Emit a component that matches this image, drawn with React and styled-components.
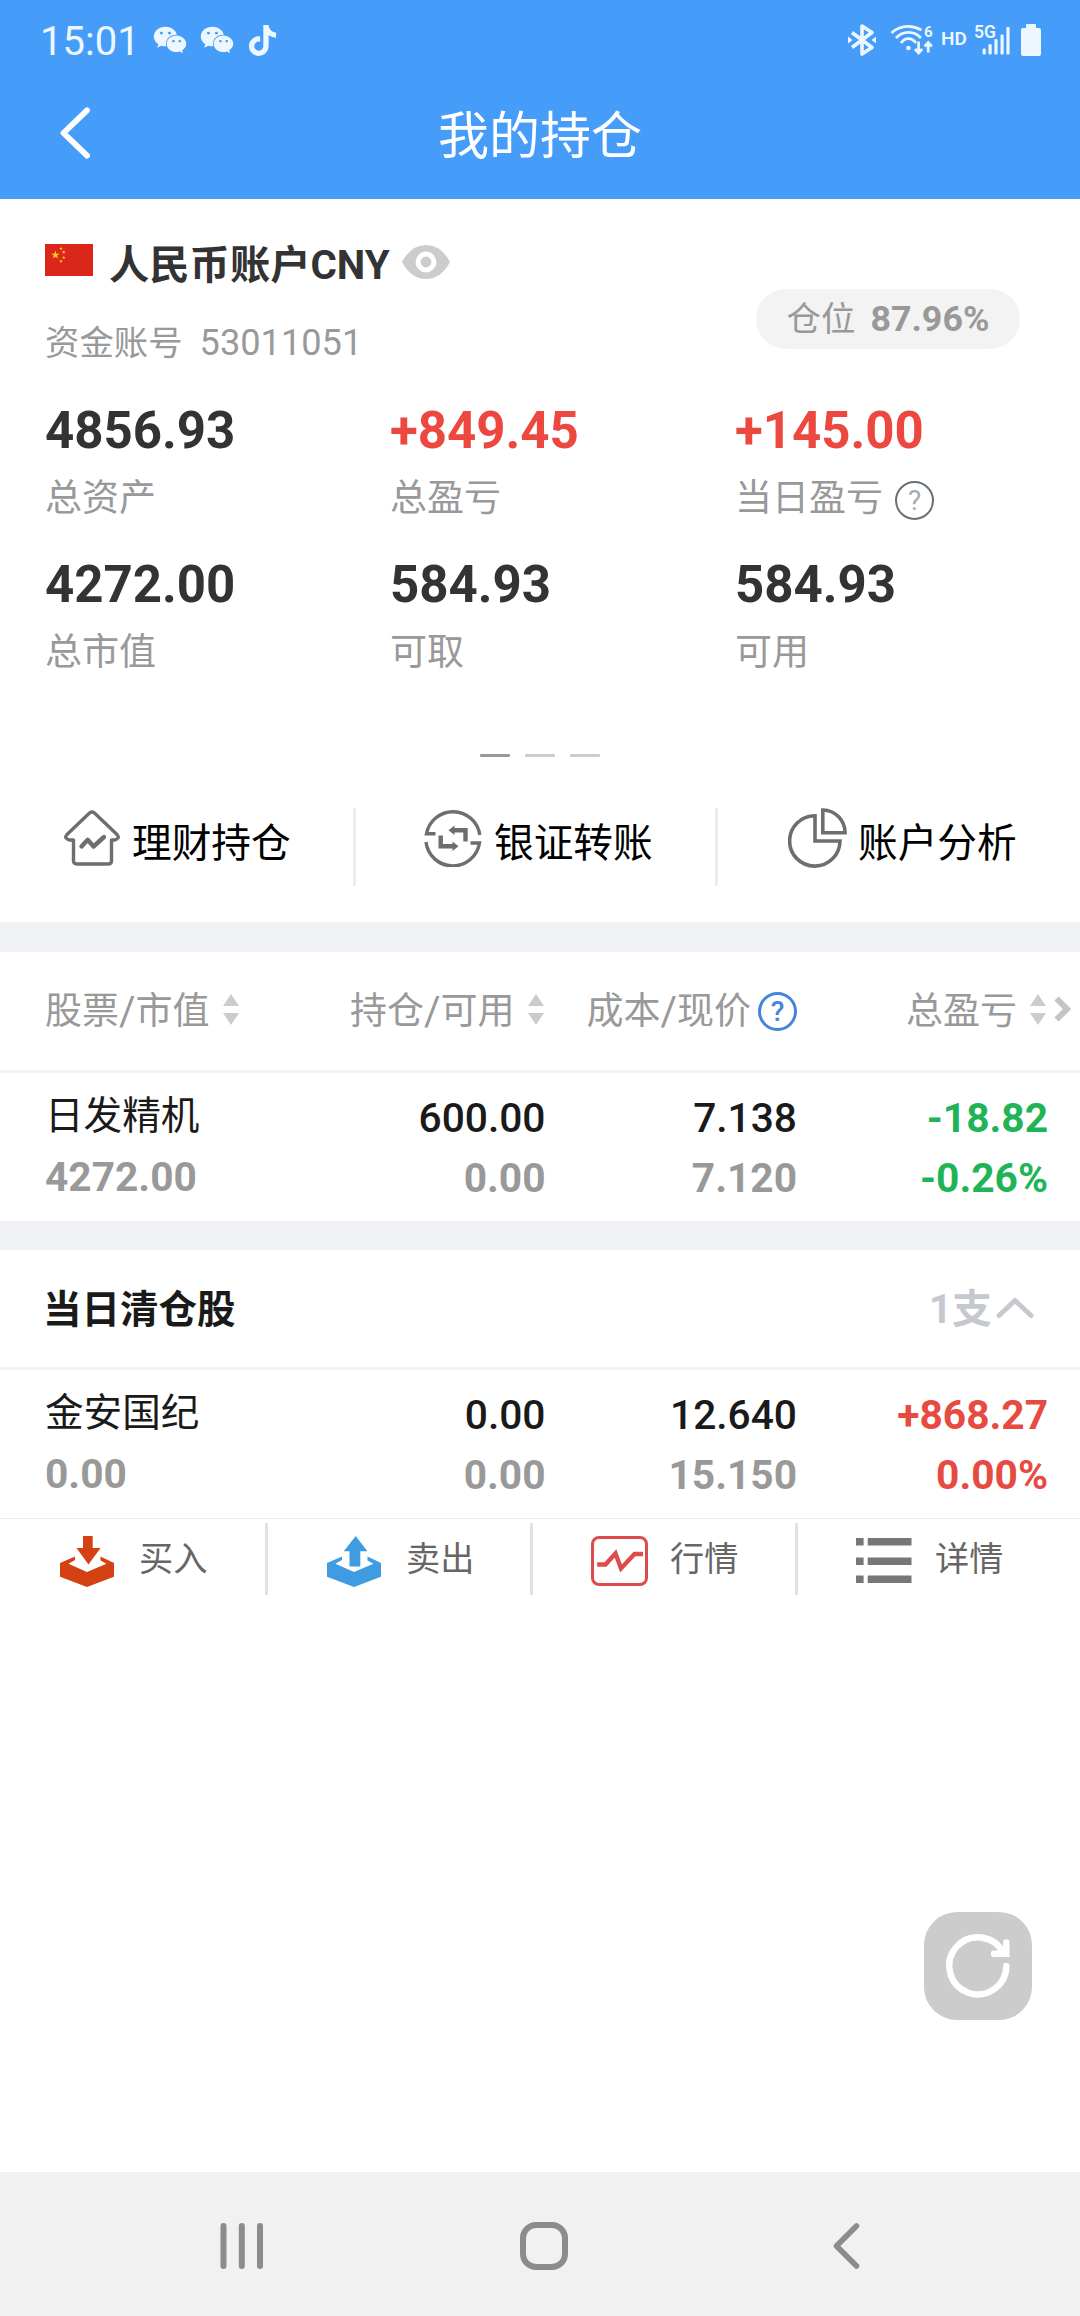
import React from 'react'
import styled, { createGlobalStyle } from 'styled-components'
import { FaWeixin, FaTiktok } from 'react-icons/fa'

const GlobalStyle = createGlobalStyle`
    * {
        box-sizing: border-box;
    }
    body {
        margin: 0;
        background: #fff;
        font-family: Roboto, 'Noto Sans CJK SC', sans-serif;
    }
    svg {
        display: block;
        flex: none;
    }
`

const Screen = styled.div`
    position: relative;
    display: flex;
    flex-direction: column;
    width: 1080px;
    height: 2316px;
    overflow: hidden;
    background: #fff;
`

const Header = styled.header`
    height: 199px;
    background: #469cf9;
    color: #fff;
`

const StatusBar = styled.div`
    display: flex;
    align-items: center;
    justify-content: space-between;
    height: 70px;
    padding: 10px 39px 0 40px;
    color: #ecf7ff;
`

const StatusGroup = styled.div`
    display: flex;
    align-items: center;
    gap: ${p => p.$gap}px;

    .bluetooth {
        margin-right: 6px;
    }
    .signal {
        margin-right: 3px;
    }
`

const Clock = styled.span`
    padding-top: 4px;
    width: 100px;
    font-size: 40px;
    line-height: 50px;
`

const Hd = styled.span`
    width: 26px;
    margin: -2px -1px 0 0;
    font-size: 19px;
    font-weight: 600;
    line-height: 24px;
`

const TitleBar = styled.div`
    display: grid;
    grid-template-columns: 180px 1fr 180px;
    align-items: center;
    height: 129px;
    padding-bottom: 4px;
`

const BackButton = styled.div`
    padding-left: 60px;
`

const Title = styled.h1`
    margin: 0;
    padding-top: 8px;
    font-size: 51px;
    font-weight: 400;
    line-height: 70px;
    text-align: center;
`

const Account = styled.section`
    display: flex;
    flex-direction: column;
    height: 723px;
    padding-top: 37px;
`

const AccountHead = styled.div`
    display: flex;
    justify-content: space-between;
    align-items: flex-start;
    padding: 0 60px 0 45px;
`

const AccountName = styled.div`
    display: flex;
    align-items: center;
    height: 60px;
    color: #333;
    font-size: 40.3px;
    font-weight: 700;
    line-height: 60px;

    .flag {
        margin: 0 16px 13px 0;
    }
    .eye {
        margin: 0 0 8px 12px;
    }
`

const AccountNumber = styled.div`
    display: flex;
    gap: 17px;
    margin-top: 17px;
    color: #999;
    font-size: 34.4px;
    line-height: 60px;
`

const Digits = styled.span`
    font-size: ${p => (p.$bold ? 35.8 : 36.2)}px;
    font-weight: ${p => (p.$bold ? 700 : 400)};
`

const PositionPill = styled.div`
    display: flex;
    justify-content: center;
    gap: 15px;
    width: 264px;
    height: 60px;
    margin-top: 53px;
    border-radius: 30px;
    background: #f3f3f3;
    color: #999;
    font-size: 34.4px;
    line-height: 60px;
`

const Metrics = styled.div`
    display: grid;
    grid-template-columns: repeat(3, 345px);
    row-gap: 26px;
    margin-top: 28px;
    padding-left: 45px;
`

const MetricValue = styled.div`
    margin-bottom: 8px;
    color: ${p => (p.$up ? '#ec483f' : '#333')};
    font-size: 51px;
    font-weight: 700;
    line-height: 60px;
`

const MetricLabel = styled.div`
    display: flex;
    align-items: center;
    gap: 12px;
    color: #999;
    font-size: 37px;
    line-height: 60px;
`

const Help = styled.span`
    display: flex;
    align-items: center;
    justify-content: center;
    width: 39px;
    height: 39px;
    margin-top: ${p => (p.$blue ? 0 : 3)}px;
    border: ${p => (p.$blue ? '3px solid #4386dc' : '2px solid #6b6e73')};
    border-radius: 50%;
    color: ${p => (p.$blue ? '#4386dc' : '#a3adb8')};
    font-size: 28px;
    font-weight: ${p => (p.$blue ? 500 : 400)};
    line-height: 35px;
`

const Pager = styled.div`
    display: flex;
    justify-content: center;
    gap: 15px;
    margin-top: 71px;
`

const Dash = styled.span`
    width: 30px;
    height: 3px;
    border-radius: 1px;
    background: ${p => (p.$active ? '#999' : '#ccc')};
`

const Shortcuts = styled.div`
    display: grid;
    grid-template-columns: 356px 362px 362px;
    margin-top: 51px;
`

const Shortcut = styled.div`
    display: flex;
    align-items: center;
    height: 78px;
    padding: 0 0 7px ${p => p.$inset}px;
    border-right: ${p => (p.$last ? 'none' : '3px solid #ececec')};
    color: #000;
    font-size: 39.7px;
    line-height: 60px;

    svg {
        margin: 0 ${p => p.$gap}px 12px 0;
    }
`

const Band = styled.div`
    height: ${p => p.$height}px;
    background: #f0f1f4;
`

const tableGrid = `
    display: grid;
    grid-template-columns: 255px 245.5px 251.5px 251px;
    padding: 0 32px 0 45px;
`

const TableHead = styled.div`
    ${tableGrid}
    align-items: center;
    height: 121px;
    padding-top: 2px;
    border-bottom: 3px solid #f1f2f2;
    color: #999;
    font-size: 37px;
    line-height: 60px;
`

const HeadCell = styled.div`
    display: flex;
    align-items: center;
    justify-content: ${p => (p.$left ? 'flex-start' : 'flex-end')};
    margin-right: ${p => p.$offset || 0}px;
    white-space: nowrap;

    .sort {
        margin-left: 13px;
        margin-bottom: 5px;
    }
    .more {
        margin-left: 8px;
        margin-bottom: 6px;
    }
`

const Slash = styled.span`
    font-size: 40px;
`

const HelpSlot = styled.span`
    margin-left: 7px;
    margin-bottom: 2px;
`

const StockRow = styled.div`
    ${tableGrid}
    height: 148px;
`

const StockCell = styled.div`
    padding-top: ${p => (p.$left ? 13 : 15)}px;
    text-align: ${p => (p.$left ? 'left' : 'right')};
    line-height: 60px;
`

const tones = { dark: '#1a1a1a', up: '#e64a41', down: '#21b457' }

const Primary = styled.div`
    height: ${p => (p.$name ? 61 : 60)}px;
    color: ${p => tones[p.$tone || 'dark']};
    font-size: ${p => (p.$name ? 38.6 : 40.7)}px;
    font-weight: ${p => (p.$name ? 400 : p.$tone ? 700 : 500)};
`

const Secondary = styled.div`
    height: 60px;
    color: ${p => (p.$tone ? tones[p.$tone] : '#999')};
    font-size: 40.7px;
    font-weight: 700;
`

const SectionHead = styled.div`
    display: flex;
    align-items: center;
    justify-content: space-between;
    height: 120px;
    padding: 2px 46px 0 43px;
    border-bottom: 3px solid #f1f2f2;
    color: #1a1a1a;
    font-size: 38.5px;
    font-weight: 700;
    line-height: 60px;
`

const Toggle = styled.div`
    display: flex;
    align-items: center;
    gap: 4px;
    color: #c6c8cf;
    font-size: 40px;

    svg {
        margin-bottom: 3px;
    }
`

const Actions = styled.div`
    display: grid;
    grid-template-columns: 268px 265px 265px 282px;
    padding-top: 4px;
    border-top: 1px solid #ececec;
`

const Action = styled.div`
    display: flex;
    align-items: center;
    height: 72px;
    padding-left: ${p => p.$inset}px;
    border-right: ${p => (p.$last ? 'none' : '3px solid #e2e2e2')};
    color: #666;
    font-size: 34.2px;
    line-height: 60px;
`

const ActionIcon = styled.span`
    width: 79px;
    padding-top: 4px;
`

const RefreshButton = styled.div`
    position: absolute;
    top: 1912px;
    left: 924px;
    width: 108px;
    height: 108px;
    border-radius: 33px;
    background: #ccc;
`

const SystemNav = styled.nav`
    display: flex;
    align-items: center;
    justify-content: space-between;
    height: 144px;
    margin-top: auto;
    padding: 4px 220px 0;
    background: #f1f1f1;

    .home {
        margin-right: 8px;
    }
`

const BluetoothIcon = () => (
    <svg className="bluetooth" width="28" height="32" viewBox="0 0 28 32" fill="none" stroke="currentColor" strokeWidth="3.6" strokeLinejoin="round">
        <path d="M4 8.5 L24 23.5 L14 30 V2 L24 8.5 L4 23.5" />
        <path d="M0 12.5 L4.5 16 L0 19.5 Z M28 12.5 L23.5 16 L28 19.5 Z" fill="currentColor" stroke="none" />
    </svg>
)

const WifiIcon = () => (
    <svg width="43" height="42" viewBox="0 -4 43 42" fill="none" stroke="currentColor" strokeWidth="2.7">
        <path d="M1.5 10 Q8 3.5 18 3.3 Q25 3.3 31.5 7" />
        <path d="M6 15 Q11 9.3 18.5 9.3 Q26 9.3 31 15" />
        <path d="M11 20 Q14 15.6 18.5 15.6 Q23 15.6 26 20" />
        <circle cx="18.4" cy="25" r="2.3" fill="currentColor" stroke="none" />
        <path d="M28.6 18.5 V29.5 M25 26 L28.6 30 L32.2 26 M38.2 29.5 V20.5 M34.6 23.5 L38.2 19.5 L41.8 23.5" />
        <text x="34" y="14" fontSize="15" fontWeight="700" fill="currentColor" stroke="none">6</text>
    </svg>
)

const signalBars = [[8.6, 24.5], [14.5, 20], [20.4, 15], [26.5, 10.5], [32.4, 3]]

const SignalIcon = () => (
    <svg className="signal" width="36" height="44" viewBox="0 -6 36 44" fill="currentColor">
        <text x="0" y="14" fontSize="17.5" fontWeight="600">5G</text>
        {signalBars.map(([x, y]) => (
            <rect key={x} x={x} y={y} width="3.2" height={30.5 - y} rx="1.2" />
        ))}
    </svg>
)

const BatteryIcon = () => (
    <svg width="20" height="32" viewBox="0 0 20 32" fill="currentColor">
        <path d="M5 1 Q5 0 6 0 H14 Q15 0 15 1 V4 H18 Q20 4 20 6 V30 Q20 32 18 32 H2 Q0 32 0 30 V6 Q0 4 2 4 H5 Z" />
    </svg>
)

const star = 'M0 -1 L.23 -.31 H.95 L.37 .12 L.59 .81 L0 .38 L-.59 .81 L-.37 .12 L-.95 -.31 H-.23 Z'

const FlagIcon = () => (
    <svg className="flag" width="48" height="32" viewBox="0 0 48 32">
        <rect width="48" height="32" fill="#db261b" />
        <g fill="#fbd21c">
            <path d={star} transform="translate(10.4 11) scale(4.4)" />
            <path d={star} transform="translate(16 4.5) scale(1.9)" />
            <path d={star} transform="translate(18.8 8.2) scale(1.9)" />
            <path d={star} transform="translate(18.8 13.5) scale(1.9)" />
            <path d={star} transform="translate(16 17.2) scale(1.9)" />
        </g>
    </svg>
)

const EyeIcon = () => (
    <svg className="eye" width="48" height="34" viewBox="0 0 48 34">
        <path d="M0 17 Q9 0 24 0 Q39 0 48 17 Q39 34 24 34 Q9 34 0 17 Z" fill="#ccc" />
        <circle cx="24" cy="17" r="7.9" fill="#ccc" stroke="#fff" strokeWidth="5" />
    </svg>
)

const HouseIcon = () => (
    <svg width="56" height="56" viewBox="0 0 56 56" fill="none" stroke="#6e6e6e" strokeWidth="3.4" strokeLinejoin="round" strokeLinecap="round">
        <path d="M9.5 30 H5.5 Q-.5 28.5 3 24.5 L25.5 3 Q28 1 30.5 3 L53 24.5 Q56.5 28.5 50.5 30 H47.5 V51 Q47.5 54 44 54 H13 Q9.5 54 9.5 51 Z" />
        <path d="M17.5 36.5 L23.7 29.8 L29.5 36.5 L40 27" strokeWidth="4.4" />
    </svg>
)

const TransferIcon = () => (
    <svg width="58" height="58" viewBox="0 0 58 58" fill="none" stroke="#6e6e6e" strokeWidth="3.4">
        <path d="M11.5 24.8 H2.5 A27 27 0 0 1 55.8 26" />
        <path d="M46.5 34 H55.5 A27 27 0 0 1 2 33" />
        <path d="M41.5 32.5 V21.3 H29 M16.7 26.5 V37.2 H30" strokeWidth="4.4" />
        <path d="M30.5 16.5 V26 L24.5 21.3 Z M28.5 32.5 V42 L34.5 37.2 Z" fill="#6e6e6e" stroke="none" />
    </svg>
)

const PieIcon = () => (
    <svg width="59" height="60" viewBox="0 0 59 60" fill="none" stroke="#6e6e6e" strokeWidth="3.6">
        <path d="M27 7.7 V33 H52 A25.2 25.2 0 1 1 27 7.7 Z" />
        <path d="M34.8 2 V24.8 H57 A22.5 22.5 0 0 0 34.8 2 Z" />
    </svg>
)

const SortIcon = () => (
    <svg className="sort" width="16" height="31" viewBox="0 0 16 31" fill="#ccc">
        <path d="M8 0 L16 12 H0 Z M0 19 H16 L8 31 Z" />
    </svg>
)

const MoreIcon = () => (
    <svg className="more" width="18" height="26" viewBox="0 0 18 26" fill="none" stroke="#c4c4c4" strokeWidth="6">
        <path d="M2.5 2.5 L13 13 L2.5 23.5" />
    </svg>
)

const CollapseIcon = () => (
    <svg width="38" height="22" viewBox="0 0 38 22" fill="none" stroke="currentColor" strokeWidth="5" strokeLinecap="round" strokeLinejoin="round">
        <path d="M3 18.5 L19 3.5 L35 18.5" />
    </svg>
)

const trayPath = 'M0 27 L15 20.5 V24 L8.5 27.7 L27 36 L46.4 27.7 L40.5 24.5 V20.5 L54 27 V40.7 L27 51 L0 40.7 Z'

const BuyIcon = () => (
    <svg width="54" height="51" viewBox="0 0 54 51" fill="#d44115">
        <path d={trayPath} />
        <path d="M23 0 H32.7 V12 H40.6 L28.5 28.5 L16.5 12 H23 Z" />
    </svg>
)

const SellIcon = () => (
    <svg width="54" height="51" viewBox="0 0 54 51" fill="#3f9ce0">
        <path d={trayPath} />
        <path d="M28.7 0 L40.5 15.3 H33.3 V30.5 H22.5 V15.3 H16.8 Z" />
    </svg>
)

const QuoteIcon = () => (
    <svg width="57" height="50" viewBox="0 0 57 50" fill="none" stroke="#dc4c4c">
        <rect x="1.5" y="1.5" width="54" height="47" rx="6.5" strokeWidth="3" />
        <path d="M6.2 28.5 H14.5 L24.5 17.5 L30 32.5 L43.5 18 H52" strokeWidth="4.4" />
    </svg>
)

const DetailIcon = () => (
    <svg width="56" height="50" viewBox="0 0 56 50" fill="#777">
        <path d="M0 2 H7.6 V9.5 H0 Z M11.7 2 H55.5 V9.5 H11.7 Z M0 21.5 H7.6 V29 H0 Z M11.7 21.5 H55.5 V29 H11.7 Z M0 39.5 H7.6 V47 H0 Z M11.7 39.5 H55.5 V47 H11.7 Z" />
    </svg>
)

const metrics = [
    { value: '4856.93', label: '总资产' },
    { value: '+849.45', label: '总盈亏', up: true },
    { value: '+145.00', label: '当日盈亏', up: true, help: true },
    { value: '4272.00', label: '总市值' },
    { value: '584.93', label: '可取' },
    { value: '584.93', label: '可用' },
]

const shortcuts = [
    { label: '理财持仓', Icon: HouseIcon, inset: 64, gap: 12 },
    { label: '银证转账', Icon: TransferIcon, inset: 68, gap: 12 },
    { label: '账户分析', Icon: PieIcon, inset: 70, gap: 11 },
]

const actions = [
    { label: '买入', Icon: BuyIcon, inset: 60 },
    { label: '卖出', Icon: SellIcon, inset: 59 },
    { label: '行情', Icon: QuoteIcon, inset: 58 },
    { label: '详情', Icon: DetailIcon, inset: 58 },
]

const holding = {
    name: '日发精机', worth: '4272.00', held: '600.00', free: '0.00',
    cost: '7.138', price: '7.120', profit: '-18.82', rate: '-0.26%', tone: 'down',
}

const cleared = {
    name: '金安国纪', worth: '0.00', held: '0.00', free: '0.00',
    cost: '12.640', price: '15.150', profit: '+868.27', rate: '0.00%', tone: 'up',
}

const Stock = ({ item }) => (
    <StockRow>
        <StockCell $left>
            <Primary $name>{item.name}</Primary>
            <Secondary>{item.worth}</Secondary>
        </StockCell>
        <StockCell>
            <Primary>{item.held}</Primary>
            <Secondary>{item.free}</Secondary>
        </StockCell>
        <StockCell>
            <Primary>{item.cost}</Primary>
            <Secondary>{item.price}</Secondary>
        </StockCell>
        <StockCell>
            <Primary $tone={item.tone}>{item.profit}</Primary>
            <Secondary $tone={item.tone}>{item.rate}</Secondary>
        </StockCell>
    </StockRow>
)

const App = () => (
    <Screen>
        <GlobalStyle />
        <Header>
            <StatusBar>
                <StatusGroup $gap={13}>
                    <Clock>15:01</Clock>
                    <FaWeixin size={34} />
                    <FaWeixin size={34} />
                    <FaTiktok size={31} />
                </StatusGroup>
                <StatusGroup $gap={8}>
                    <BluetoothIcon />
                    <WifiIcon />
                    <Hd>HD</Hd>
                    <SignalIcon />
                    <BatteryIcon />
                </StatusGroup>
            </StatusBar>
            <TitleBar>
                <BackButton>
                    <svg width="31" height="52" viewBox="0 0 31 52" fill="none" stroke="#fff" strokeWidth="5.8" strokeLinecap="round" strokeLinejoin="round">
                        <path d="M27 3.3 L3.5 26 L27 48.7" />
                    </svg>
                </BackButton>
                <Title>我的持仓</Title>
            </TitleBar>
        </Header>

        <Account>
            <AccountHead>
                <div>
                    <AccountName>
                        <FlagIcon />
                        人民币账户CNY
                        <EyeIcon />
                    </AccountName>
                    <AccountNumber>
                        <span>资金账号</span>
                        <Digits>53011051</Digits>
                    </AccountNumber>
                </div>
                <PositionPill>
                    <span>仓位</span>
                    <Digits $bold>87.96%</Digits>
                </PositionPill>
            </AccountHead>
            <Metrics>
                {metrics.map(m => (
                    <div key={m.label}>
                        <MetricValue $up={m.up}>{m.value}</MetricValue>
                        <MetricLabel>
                            {m.label}
                            {m.help && <Help>?</Help>}
                        </MetricLabel>
                    </div>
                ))}
            </Metrics>
            <Pager>
                <Dash $active />
                <Dash />
                <Dash />
            </Pager>
            <Shortcuts>
                {shortcuts.map(({ label, Icon, inset, gap }, i) => (
                    <Shortcut key={label} $inset={inset} $gap={gap} $last={i === 2}>
                        <Icon />
                        {label}
                    </Shortcut>
                ))}
            </Shortcuts>
        </Account>

        <Band $height={30} />
        <TableHead>
            <HeadCell $left>股票<Slash>/</Slash>市值<SortIcon /></HeadCell>
            <HeadCell $offset={2}>持仓<Slash>/</Slash>可用<SortIcon /></HeadCell>
            <HeadCell>成本<Slash>/</Slash>现价<HelpSlot><Help $blue>?</Help></HelpSlot></HeadCell>
            <HeadCell $offset={-24}>总盈亏<SortIcon /><MoreIcon /></HeadCell>
        </TableHead>
        <Stock item={holding} />

        <Band $height={29} />
        <SectionHead>
            当日清仓股
            <Toggle>
                1支
                <CollapseIcon />
            </Toggle>
        </SectionHead>
        <Stock item={cleared} />
        <Actions>
            {actions.map(({ label, Icon, inset }, i) => (
                <Action key={label} $inset={inset} $last={i === 3}>
                    <ActionIcon><Icon /></ActionIcon>
                    {label}
                </Action>
            ))}
        </Actions>

        <RefreshButton>
            <svg width="108" height="108" viewBox="0 0 108 108" fill="none" stroke="#fff" strokeWidth="6.4" strokeLinecap="round">
                <path d="M82.3 54 A28.5 28.5 0 1 1 79 40.5" />
                <path d="M82.3 30.5 V41.8 H70" />
            </svg>
        </RefreshButton>

        <SystemNav>
            <svg width="43" height="46" viewBox="0 0 43 46" stroke="#8c8c8c" strokeWidth="6" strokeLinecap="round">
                <path d="M3.5 3 V43 M21.8 3 V43 M40 3 V43" />
            </svg>
            <svg className="home" width="48" height="48" viewBox="0 0 48 48" fill="none" stroke="#8c8c8c" strokeWidth="6">
                <rect x="3" y="3" width="42" height="42" rx="13" />
            </svg>
            <svg width="27" height="46" viewBox="0 0 27 46" fill="none" stroke="#8c8c8c" strokeWidth="5.6" strokeLinecap="round" strokeLinejoin="round">
                <path d="M23.5 3 L3.5 23 L23.5 43" />
            </svg>
        </SystemNav>
    </Screen>
)

export default App
